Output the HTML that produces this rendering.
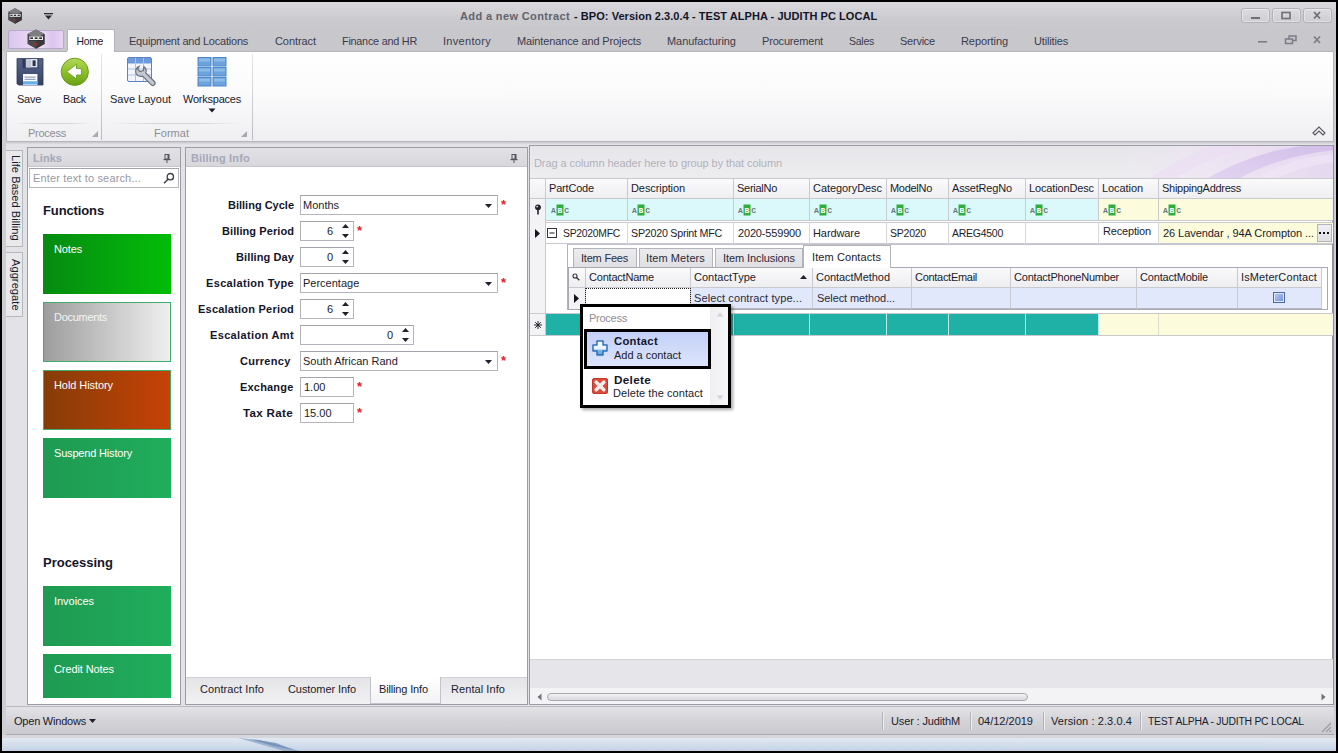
<!DOCTYPE html>
<html lang="en"><head><meta charset="utf-8"><title>Add a new Contract - BPO</title>
<style>
html,body{margin:0;padding:0;}
body{width:1338px;height:753px;overflow:hidden;background:#000;position:relative;font-family:"Liberation Sans",sans-serif;font-size:11px;color:#1b1b2b;}
div,span.t,svg{position:absolute;box-sizing:border-box;}
span.t{white-space:pre;}
.g{color:#8d8d96;}
.w{color:#fff;}

</style></head>
<body>
<div style="left:2px;top:2px;width:1334px;height:749px;background:#cdcdd2;"></div>
<div style="left:2px;top:735px;width:1334px;height:3px;background:#d6d6db;"></div>
<div style="left:2px;top:738px;width:1334px;height:13px;background:linear-gradient(#e2e9f3,#c4d2e6);"></div>
<svg style="left:236px;top:738px" width="70" height="13"><path d="M2 0 L24 2 L64 13 L48 13 L20 5 Z" fill="#8aa3c6" opacity=".75"/><path d="M14 1 L40 5 L58 12 L38 8 Z" fill="#6685b0" opacity=".7"/></svg>
<div style="left:2px;top:2px;width:1334px;height:27px;background:linear-gradient(#d9d9dd,#cbcbd0 60%,#c6c6cb);"></div>
<div style="left:2px;top:29px;width:1334px;height:22px;background:#c7c7cc;"></div>
<svg style="left:7px;top:8px" width="16" height="16" viewBox="0 0 16 16"><polygon points="8,0.3 14.8,4 14.8,12 8,15.7 1.2,12 1.2,4" fill="#4a4a4e"/><polygon points="8,0.3 14.8,4 8,7.6 1.2,4" fill="#7d7d82"/><polygon points="8,7.6 14.8,4 14.8,12 8,15.7" fill="#38383c"/><rect x="2.2" y="5.6" width="11.6" height="3.6" fill="#2c2c2e"/><rect x="3" y="6.3" width="3" height="2.1" fill="none" stroke="#f0f0f0" stroke-width=".8"/><rect x="6.6" y="6.3" width="3" height="2.1" fill="none" stroke="#f0f0f0" stroke-width=".8"/><rect x="10.2" y="6.3" width="3" height="2.1" fill="none" stroke="#f0f0f0" stroke-width=".8"/><path d="M6.5 11.5 L8 13 L9.5 11" stroke="#b32626" stroke-width="1" fill="none"/></svg>
<svg style="left:44px;top:13px" width="9" height="7"><rect x="0" y="0" width="9" height="1.3" fill="#2a2a35"/><path d="M1 2.6 L8 2.6 L4.5 6.4 Z" fill="#2a2a35"/></svg>
<span class="t" style="left:460.0px;top:8.5px;line-height:15px;font-weight:bold;letter-spacing:0.37px;color:#63636e;">Add a new Contract</span>
<span class="t" style="left:574.0px;top:8.5px;line-height:15px;font-weight:bold;letter-spacing:0.05px;color:#15152a;">- BPO: Version 2.3.0.4 - TEST ALPHA - JUDITH PC LOCAL</span>
<div style="left:1241px;top:8px;width:29px;height:15px;border:1px solid #b1b1b8;border-radius:3px;background:linear-gradient(#dcdce0,#cdcdd2);box-shadow:inset 0 0 0 1px rgba(255,255,255,.4);"></div>
<div style="left:1272px;top:8px;width:29px;height:15px;border:1px solid #b1b1b8;border-radius:3px;background:linear-gradient(#dcdce0,#cdcdd2);box-shadow:inset 0 0 0 1px rgba(255,255,255,.4);"></div>
<div style="left:1303px;top:8px;width:29px;height:15px;border:1px solid #b1b1b8;border-radius:3px;background:linear-gradient(#dcdce0,#cdcdd2);box-shadow:inset 0 0 0 1px rgba(255,255,255,.4);"></div>
<svg style="left:1241px;top:8px" width="92" height="15"><rect x="10" y="9" width="9" height="2" fill="#6f6f78"/><rect x="41" y="4.5" width="8" height="6" fill="none" stroke="#6f6f78" stroke-width="1.6"/><path d="M73 4 L79 10.5 M79 4 L73 10.5" stroke="#6f6f78" stroke-width="1.8" fill="none"/></svg>
<svg style="left:1255px;top:33px" width="70" height="14"><rect x="3" y="8" width="9" height="1.6" fill="#7c7c86"/><rect x="34" y="3" width="7" height="4.5" fill="none" stroke="#7c7c86" stroke-width="1.5"/><rect x="30.5" y="6" width="7" height="4.5" fill="#c7c7cc" stroke="#7c7c86" stroke-width="1.5"/><path d="M59 3.5 L65 10 M65 3.5 L59 10" stroke="#7c7c86" stroke-width="1.7" fill="none"/></svg>
<div style="left:8px;top:30px;width:56px;height:19px;border:1px solid #b9a8cc;border-radius:2px;background:linear-gradient(90deg,#d9c6ee,#e6d3f3 30%,#efe2f6 55%,#dcc4ef 80%,#e9d6f5);"></div>
<svg style="left:26px;top:29px" width="20" height="20" viewBox="0 0 16 16"><polygon points="8,0.3 14.8,4 14.8,12 8,15.7 1.2,12 1.2,4" fill="#4a4a4e"/><polygon points="8,0.3 14.8,4 8,7.6 1.2,4" fill="#7d7d82"/><polygon points="8,7.6 14.8,4 14.8,12 8,15.7" fill="#38383c"/><rect x="2.2" y="5.6" width="11.6" height="3.6" fill="#2c2c2e"/><rect x="3" y="6.3" width="3" height="2.1" fill="none" stroke="#f0f0f0" stroke-width=".8"/><rect x="6.6" y="6.3" width="3" height="2.1" fill="none" stroke="#f0f0f0" stroke-width=".8"/><rect x="10.2" y="6.3" width="3" height="2.1" fill="none" stroke="#f0f0f0" stroke-width=".8"/><path d="M6.5 11.5 L8 13 L9.5 11" stroke="#b32626" stroke-width="1" fill="none"/></svg>
<div style="left:67px;top:29px;width:48px;height:23px;background:#fff;border:1px solid #b4b4bb;border-bottom:none;border-radius:2px 2px 0 0;"></div>
<span class="t" style="left:76.5px;top:33.7px;line-height:15px;font-size:10.31px;letter-spacing:-0.25px;color:#1a1a2a;">Home</span>
<span class="t" style="left:129.0px;top:33.5px;line-height:15px;letter-spacing:-0.22px;color:#3c3c4c;">Equipment and Locations</span>
<span class="t" style="left:275.0px;top:33.5px;line-height:15px;letter-spacing:-0.07px;color:#3c3c4c;">Contract</span>
<span class="t" style="left:342.0px;top:33.5px;line-height:15px;font-size:10.86px;letter-spacing:-0.25px;color:#3c3c4c;">Finance and HR</span>
<span class="t" style="left:443.0px;top:33.5px;line-height:15px;letter-spacing:0.31px;color:#3c3c4c;">Inventory</span>
<span class="t" style="left:517.0px;top:33.5px;line-height:15px;letter-spacing:-0.13px;color:#3c3c4c;">Maintenance and Projects</span>
<span class="t" style="left:667.0px;top:33.5px;line-height:15px;letter-spacing:-0.06px;color:#3c3c4c;">Manufacturing</span>
<span class="t" style="left:762.0px;top:33.5px;line-height:15px;letter-spacing:-0.18px;color:#3c3c4c;">Procurement</span>
<span class="t" style="left:849.0px;top:33.7px;line-height:15px;font-size:10.49px;letter-spacing:-0.25px;color:#3c3c4c;">Sales</span>
<span class="t" style="left:900.0px;top:33.5px;line-height:15px;letter-spacing:-0.24px;color:#3c3c4c;">Service</span>
<span class="t" style="left:961.0px;top:33.5px;line-height:15px;letter-spacing:-0.08px;color:#3c3c4c;">Reporting</span>
<span class="t" style="left:1034.0px;top:33.5px;line-height:15px;letter-spacing:-0.16px;color:#3c3c4c;">Utilities</span>
<div style="left:6px;top:51px;width:1328px;height:91px;background:linear-gradient(#ffffff,#fbfbfc 45%,#efeff2);border:1px solid #b4b4bb;"></div>
<div style="left:67px;top:51px;width:47px;height:1px;background:#fff;"></div>
<div style="left:101px;top:54px;width:1px;height:86px;background:linear-gradient(#e6e6ea,#b9b9c0);"></div>
<div style="left:252px;top:54px;width:1px;height:86px;background:linear-gradient(#e6e6ea,#b9b9c0);"></div>
<div style="left:14px;top:123px;width:78px;height:1px;background:linear-gradient(90deg,rgba(200,200,206,0),#d4d4da 30%,#d4d4da 70%,rgba(200,200,206,0));"></div>
<div style="left:112px;top:123px;width:128px;height:1px;background:linear-gradient(90deg,rgba(200,200,206,0),#d4d4da 30%,#d4d4da 70%,rgba(200,200,206,0));"></div>
<svg style="left:14px;top:57px" width="32" height="32" viewBox="0 0 32 32"><defs><linearGradient id="sv" x1="0" y1="0" x2="0" y2="1"><stop offset="0" stop-color="#56648a"/><stop offset="1" stop-color="#364266"/></linearGradient></defs><path d="M3 1.6 H29 V28 H4.4 L3 26.6 Z" fill="url(#sv)" stroke="#2b3556" stroke-width=".8"/><rect x="8.5" y="2" width="16" height="9.2" fill="#2f3a5c"/><rect x="11.8" y="2" width="11.6" height="8.4" fill="#dfe3ea"/><rect x="12" y="2" width="5" height="8.4" fill="#c3c9d4"/><rect x="18.6" y="3.4" width="3" height="5.6" fill="#2a3352"/><rect x="9" y="17" width="14.4" height="11" fill="#fbfcfe"/><rect x="9" y="24.2" width="14.4" height="3.3" fill="#69aee4"/><rect x="10.6" y="19.6" width="11" height="1" fill="#7f8db0"/><rect x="10.6" y="21.8" width="11" height="1" fill="#7f8db0"/></svg>
<svg style="left:59px;top:56px" width="32" height="32" viewBox="0 0 32 32"><defs><linearGradient id="bk" x1="0" y1="0" x2="0" y2="1"><stop offset="0" stop-color="#b3d957"/><stop offset=".5" stop-color="#8cc02c"/><stop offset="1" stop-color="#69a015"/></linearGradient></defs><circle cx="15.8" cy="15.8" r="13.6" fill="url(#bk)" stroke="#6a9c1c" stroke-width="1"/><path d="M7.7 15.7 L17.5 8.2 V12.6 H22.4 V19 H17.5 V23 Z" fill="#fff" stroke="#6d9f1e" stroke-width=".9" stroke-linejoin="round"/></svg>
<svg style="left:125px;top:56px" width="34" height="34" viewBox="0 0 34 34"><rect x="2.5" y="1.5" width="24" height="24" rx="1.5" fill="#f1f5fb" stroke="#5c82c0" stroke-width="1"/><path d="M3 2 H26 V7.5 H3 Z" fill="#6b9bdc"/><path d="M3 13 H26 M3 19 H26 M10.5 2 V25 M18.5 2 V25" stroke="#a9c3e4" stroke-width="1"/><path d="M14.2 10.2 a5.4 5.4 0 0 0 -3 7.5 a5.4 5.4 0 0 0 6.4 2.4 l8.4 8.6 a2.3 2.3 0 0 0 3.4 -3.2 l-8.7 -8.6 a5.4 5.4 0 0 0 -1.7 -6.2 l-0.6 3.8 l-3.3 1 l-2.4 -2.3 z" fill="#c3c7cf" stroke="#6a6f7c" stroke-width="1.2"/></svg>
<svg style="left:197px;top:57px" width="30" height="30" viewBox="0 0 30 30"><rect x="1" y="0.5" width="13" height="8.5" fill="#6da3dc" stroke="#4b86c9" stroke-width="1"/><rect x="2" y="1.5" width="11" height="3" fill="#8dbbe8"/><rect x="16" y="0.5" width="13" height="8.5" fill="#6da3dc" stroke="#4b86c9" stroke-width="1"/><rect x="17" y="1.5" width="11" height="3" fill="#8dbbe8"/><rect x="1" y="10.5" width="13" height="8.5" fill="#6da3dc" stroke="#4b86c9" stroke-width="1"/><rect x="2" y="11.5" width="11" height="3" fill="#8dbbe8"/><rect x="16" y="10.5" width="13" height="8.5" fill="#6da3dc" stroke="#4b86c9" stroke-width="1"/><rect x="17" y="11.5" width="11" height="3" fill="#8dbbe8"/><rect x="1" y="20.5" width="13" height="8.5" fill="#6da3dc" stroke="#4b86c9" stroke-width="1"/><rect x="2" y="21.5" width="11" height="3" fill="#8dbbe8"/><rect x="16" y="20.5" width="13" height="8.5" fill="#6da3dc" stroke="#4b86c9" stroke-width="1"/><rect x="17" y="21.5" width="11" height="3" fill="#8dbbe8"/></svg>
<span class="t" style="left:17.0px;top:91.5px;line-height:15px;letter-spacing:-0.27px;color:#1a1a2a;">Save</span>
<span class="t" style="left:63.0px;top:91.6px;line-height:15px;font-size:10.79px;letter-spacing:-0.25px;color:#1a1a2a;">Back</span>
<span class="t" style="left:110.0px;top:91.5px;line-height:15px;letter-spacing:-0.01px;color:#1a1a2a;">Save Layout</span>
<span class="t" style="left:183.0px;top:91.5px;line-height:15px;letter-spacing:-0.23px;color:#1a1a2a;">Workspaces</span>
<svg style="left:208px;top:108px" width="8" height="5"><path d="M0.5 0.5 H7.5 L4 4.5 Z" fill="#1a1a2a"/></svg>
<span class="t g" style="left:28.0px;top:125.5px;line-height:15px;letter-spacing:-0.25px;">Process</span>
<span class="t g" style="left:154.0px;top:125.5px;line-height:15px;letter-spacing:0.03px;">Format</span>
<svg style="left:92px;top:131px" width="6" height="6"><path d="M6 0 V6 H0 Z" fill="#a8a8b0"/></svg>
<svg style="left:241px;top:131px" width="6" height="6"><path d="M6 0 V6 H0 Z" fill="#a8a8b0"/></svg>
<svg style="left:1312px;top:126px" width="14" height="10"><path d="M1 7 L7 1 L13 7 L11 9 L7 5 L3 9 Z" stroke="#55555f" stroke-width="1.1" fill="#f4f4f6"/></svg>
<div style="left:6px;top:142px;width:1328px;height:565px;background:#e3e3e7;"></div>
<div style="left:6px;top:142px;width:1328px;height:2px;background:linear-gradient(#c9c9ce,#dcdce0);"></div>
<div style="left:6px;top:150px;width:17px;height:97px;background:#e9e9ec;border:1px solid #b7b7be;border-left:none;"></div>
<div style="left:6px;top:252px;width:17px;height:65px;background:#e9e9ec;border:1px solid #b7b7be;border-left:none;"></div>
<span class="t" style="left:22.5px;top:155px;line-height:14px;transform-origin:0 0;transform:rotate(90deg);letter-spacing:0.07px;color:#1b1b2b;">Life Based Billing</span>
<span class="t" style="left:22.5px;top:258.5px;line-height:14px;transform-origin:0 0;transform:rotate(90deg);letter-spacing:0.1px;color:#1b1b2b;">Aggregate</span>
<div style="left:27px;top:147px;width:154px;height:558px;background:#fff;border:1px solid #9c9ca6;"></div>
<div style="left:28px;top:148px;width:152px;height:19px;background:linear-gradient(#e2e2e6,#d7d7dc);border-bottom:1px solid #c6c6cc;"></div>
<span class="t" style="left:33.0px;top:150.5px;line-height:15px;font-weight:bold;letter-spacing:0.05px;color:#a4a8b8;">Links</span>
<svg style="left:163px;top:154px" width="8" height="9"><rect x="2" y="0.5" width="4" height="4.5" fill="none" stroke="#55555f" stroke-width="1"/><rect x="4.5" y="1" width="1.5" height="4" fill="#55555f"/><rect x="0.5" y="5" width="7" height="1.2" fill="#55555f"/><rect x="3.5" y="6" width="1" height="3" fill="#55555f"/></svg>
<div style="left:29px;top:168px;width:150px;height:20px;background:#fff;border:1px solid #b4b4ba;border-top-color:#a2a2a9;"></div>
<span class="t" style="left:33.0px;top:170.5px;line-height:15px;letter-spacing:0.15px;color:#9a9aa2;">Enter text to search...</span>
<svg style="left:163px;top:172px" width="12" height="12"><circle cx="7.3" cy="4.7" r="3.2" fill="none" stroke="#3a3a44" stroke-width="1.3"/><path d="M5 7.2 L1 11.2" stroke="#3a3a44" stroke-width="1.5"/></svg>
<span class="t" style="left:43.0px;top:201.5px;line-height:17px;font-size:13.00px;font-weight:bold;letter-spacing:-0.12px;color:#15152a;">Functions</span>
<span class="t" style="left:43.0px;top:553.5px;line-height:17px;font-size:13.00px;font-weight:bold;letter-spacing:-0.01px;color:#15152a;">Processing</span>
<div style="left:43px;top:234px;width:128px;height:60px;background:linear-gradient(90deg,#078a12,#02bd08);"></div>
<span class="t" style="left:54.0px;top:241.5px;line-height:15px;letter-spacing:-0.15px;color:#fff;">Notes</span>
<div style="left:43px;top:302px;width:128px;height:60px;background:linear-gradient(90deg,#9d9d9d,#efefef);border:1px solid #3fae6c;"></div>
<span class="t" style="left:54.0px;top:309.5px;line-height:15px;letter-spacing:-0.29px;color:#f4f4f4;">Documents</span>
<div style="left:43px;top:370px;width:128px;height:60px;background:linear-gradient(90deg,#863c08,#c64206);border:1px solid #3fae6c;"></div>
<span class="t" style="left:54.0px;top:377.5px;line-height:15px;letter-spacing:-0.08px;color:#fff;">Hold History</span>
<div style="left:43px;top:438px;width:128px;height:60px;background:linear-gradient(90deg,#1f9a52,#1fae5c);"></div>
<span class="t" style="left:54.0px;top:445.5px;line-height:15px;letter-spacing:-0.18px;color:#fff;">Suspend History</span>
<div style="left:43px;top:586px;width:128px;height:60px;background:linear-gradient(90deg,#1f9a52,#1fae5c);"></div>
<span class="t" style="left:54.0px;top:593.5px;line-height:15px;letter-spacing:-0.04px;color:#fff;">Invoices</span>
<div style="left:43px;top:654px;width:128px;height:44px;background:linear-gradient(90deg,#1f9a52,#1fae5c);"></div>
<span class="t" style="left:54.0px;top:661.5px;line-height:15px;letter-spacing:-0.10px;color:#fff;">Credit Notes</span>
<div style="left:185px;top:147px;width:343px;height:558px;background:#fff;border:1px solid #9c9ca6;"></div>
<div style="left:186px;top:148px;width:341px;height:19px;background:linear-gradient(#e2e2e6,#d7d7dc);border-bottom:1px solid #c6c6cc;"></div>
<span class="t" style="left:191.0px;top:150.5px;line-height:15px;font-weight:bold;letter-spacing:0.18px;color:#a4a8b8;">Billing Info</span>
<svg style="left:510px;top:154px" width="8" height="9"><rect x="2" y="0.5" width="4" height="4.5" fill="none" stroke="#55555f" stroke-width="1"/><rect x="4.5" y="1" width="1.5" height="4" fill="#55555f"/><rect x="0.5" y="5" width="7" height="1.2" fill="#55555f"/><rect x="3.5" y="6" width="1" height="3" fill="#55555f"/></svg>
<span class="t" style="left:228.0px;top:197.5px;line-height:15px;font-weight:bold;letter-spacing:-0.00px;color:#15152a;">Billing Cycle</span>
<div style="left:300px;top:195px;width:198px;height:20px;background:#fff;border:1px solid #b4b4ba;border-top-color:#a2a2a9;"></div>
<span class="t" style="left:303.0px;top:197.5px;line-height:15px;">Months</span>
<svg style="left:485px;top:204px" width="7" height="4"><path d="M0 0 H7 L3.5 4 Z" fill="#20202c"/></svg>
<span class="t" style="left:501px;top:198px;color:#e8202a;font-weight:bold;font-size:13px;line-height:14px;">*</span>
<span class="t" style="left:222.0px;top:223.5px;line-height:15px;font-weight:bold;letter-spacing:0.08px;color:#15152a;">Billing Period</span>
<div style="left:300px;top:221px;width:54px;height:20px;background:#fff;border:1px solid #b4b4ba;border-top-color:#a2a2a9;"></div>
<span class="t" style="left:326.9px;top:223.5px;line-height:15px;">6</span>
<svg style="left:342px;top:224px" width="7" height="4"><path d="M0 4 H7 L3.5 0 Z" fill="#20202c"/></svg>
<svg style="left:342px;top:234px" width="7" height="4"><path d="M0 0 H7 L3.5 4 Z" fill="#20202c"/></svg>
<span class="t" style="left:357px;top:224px;color:#e8202a;font-weight:bold;font-size:13px;line-height:14px;">*</span>
<span class="t" style="left:236.0px;top:249.5px;line-height:15px;font-weight:bold;letter-spacing:0.11px;color:#15152a;">Billing Day</span>
<div style="left:300px;top:247px;width:54px;height:20px;background:#fff;border:1px solid #b4b4ba;border-top-color:#a2a2a9;"></div>
<span class="t" style="left:326.9px;top:249.5px;line-height:15px;">0</span>
<svg style="left:342px;top:250px" width="7" height="4"><path d="M0 4 H7 L3.5 0 Z" fill="#20202c"/></svg>
<svg style="left:342px;top:260px" width="7" height="4"><path d="M0 0 H7 L3.5 4 Z" fill="#20202c"/></svg>
<span class="t" style="left:206.0px;top:275.5px;line-height:15px;font-weight:bold;letter-spacing:0.34px;color:#15152a;">Escalation Type</span>
<div style="left:300px;top:273px;width:198px;height:20px;background:#fff;border:1px solid #b4b4ba;border-top-color:#a2a2a9;"></div>
<span class="t" style="left:303.0px;top:275.5px;line-height:15px;">Percentage</span>
<svg style="left:485px;top:282px" width="7" height="4"><path d="M0 0 H7 L3.5 4 Z" fill="#20202c"/></svg>
<span class="t" style="left:501px;top:276px;color:#e8202a;font-weight:bold;font-size:13px;line-height:14px;">*</span>
<span class="t" style="left:198.0px;top:301.5px;line-height:15px;font-weight:bold;letter-spacing:0.22px;color:#15152a;">Escalation Period</span>
<div style="left:300px;top:299px;width:54px;height:20px;background:#fff;border:1px solid #b4b4ba;border-top-color:#a2a2a9;"></div>
<span class="t" style="left:326.9px;top:301.5px;line-height:15px;">6</span>
<svg style="left:342px;top:302px" width="7" height="4"><path d="M0 4 H7 L3.5 0 Z" fill="#20202c"/></svg>
<svg style="left:342px;top:312px" width="7" height="4"><path d="M0 0 H7 L3.5 4 Z" fill="#20202c"/></svg>
<span class="t" style="left:210.0px;top:327.5px;line-height:15px;font-weight:bold;letter-spacing:0.35px;color:#15152a;">Escalation Amt</span>
<div style="left:300px;top:325px;width:114px;height:20px;background:#fff;border:1px solid #b4b4ba;border-top-color:#a2a2a9;"></div>
<span class="t" style="left:386.9px;top:327.5px;line-height:15px;">0</span>
<svg style="left:402px;top:328px" width="7" height="4"><path d="M0 4 H7 L3.5 0 Z" fill="#20202c"/></svg>
<svg style="left:402px;top:338px" width="7" height="4"><path d="M0 0 H7 L3.5 4 Z" fill="#20202c"/></svg>
<span class="t" style="left:240.0px;top:353.5px;line-height:15px;font-weight:bold;letter-spacing:0.28px;color:#15152a;">Currency</span>
<div style="left:300px;top:351px;width:198px;height:20px;background:#fff;border:1px solid #b4b4ba;border-top-color:#a2a2a9;"></div>
<span class="t" style="left:303.0px;top:353.5px;line-height:15px;">South African Rand</span>
<svg style="left:485px;top:360px" width="7" height="4"><path d="M0 0 H7 L3.5 4 Z" fill="#20202c"/></svg>
<span class="t" style="left:501px;top:354px;color:#e8202a;font-weight:bold;font-size:13px;line-height:14px;">*</span>
<span class="t" style="left:240.0px;top:379.5px;line-height:15px;font-weight:bold;letter-spacing:0.19px;color:#15152a;">Exchange</span>
<div style="left:300px;top:377px;width:54px;height:20px;background:#fff;border:1px solid #b4b4ba;border-top-color:#a2a2a9;"></div>
<span class="t" style="left:304.0px;top:379.5px;line-height:15px;">1.00</span>
<span class="t" style="left:357px;top:380px;color:#e8202a;font-weight:bold;font-size:13px;line-height:14px;">*</span>
<span class="t" style="left:243.0px;top:405.3px;line-height:15px;font-size:11.62px;font-weight:bold;letter-spacing:0.30px;color:#15152a;">Tax Rate</span>
<div style="left:300px;top:403px;width:54px;height:20px;background:#fff;border:1px solid #b4b4ba;border-top-color:#a2a2a9;"></div>
<span class="t" style="left:304.0px;top:405.5px;line-height:15px;">15.00</span>
<span class="t" style="left:357px;top:406px;color:#e8202a;font-weight:bold;font-size:13px;line-height:14px;">*</span>
<div style="left:186px;top:677px;width:341px;height:27px;background:linear-gradient(#e4e4e8,#f1f1f3);border-top:1px solid #d0d0d6;"></div>
<div style="left:370px;top:677px;width:71px;height:27px;background:linear-gradient(#ffffff,#f2f2f4);border:1px solid #c2c2ca;border-top:none;"></div>
<span class="t" style="left:200.0px;top:681.5px;line-height:15px;letter-spacing:0.08px;">Contract Info</span>
<span class="t" style="left:288.0px;top:681.5px;line-height:15px;letter-spacing:-0.08px;">Customer Info</span>
<span class="t" style="left:379.0px;top:681.5px;line-height:15px;letter-spacing:-0.15px;">Billing Info</span>
<span class="t" style="left:451.0px;top:681.5px;line-height:15px;letter-spacing:0.07px;">Rental Info</span>
<div style="left:529px;top:145px;width:805px;height:560px;background:#fff;border:1px solid #9c9ca6;"></div>
<div style="left:1332px;top:145px;width:2px;height:560px;background:#92929b;"></div>
<div style="left:530px;top:146px;width:803px;height:32px;background:linear-gradient(#e6e6ea,#ededf0);"></div>
<svg style="left:1080px;top:146px" width="253" height="32" viewBox="0 0 253 31" preserveAspectRatio="none"><defs><linearGradient id="pg" x1="0" y1="0" x2="1" y2="0"><stop offset="0" stop-color="#efe6f4" stop-opacity="0"/><stop offset=".45" stop-color="#efe3f5" stop-opacity=".9"/><stop offset="1" stop-color="#e3d3f0"/></linearGradient><linearGradient id="pg2" x1="0" y1="1" x2="1" y2="0"><stop offset="0" stop-color="#d9c6ee"/><stop offset="1" stop-color="#c7aee6"/></linearGradient></defs><rect x="40" y="0" width="213" height="31" fill="url(#pg)" opacity=".8"/><path d="M96 31 C125 14 150 5 180 0 H132 C110 8 85 20 70 31 Z" fill="#ead9f3" opacity=".45"/><path d="M128 31 C160 14 190 4 222 0 H253 V4 C215 8 185 18 160 31 Z" fill="url(#pg2)" opacity=".6"/><path d="M175 31 C200 18 225 10 253 8 V16 C232 18 212 24 198 31 Z" fill="#efe6f7" opacity=".7"/></svg>
<span class="t" style="left:534.0px;top:155.5px;line-height:15px;letter-spacing:-0.08px;color:#b1b1ba;">Drag a column header here to group by that column</span>
<div style="left:530px;top:178px;width:803px;height:21px;background:linear-gradient(#fafafb,#efeff2);border-top:1px solid #c9c9d0;border-bottom:1px solid #c9c9d0;"></div>
<div style="left:530px;top:199px;width:803px;height:22px;background:#f3f3f5;border-bottom:1px solid #c9c9d0;"></div>
<div style="left:546px;top:199px;width:552px;height:21px;background:#dbf9fa;"></div>
<div style="left:1098px;top:199px;width:234px;height:21px;background:#fcfbdb;"></div>
<div style="left:530px;top:222px;width:803px;height:22px;background:#fff;border-top:1px solid #c9c9d0;border-bottom:1px solid #c9c9d0;"></div>
<div style="left:1158px;top:223px;width:174px;height:20px;background:#fcfbdb;"></div>
<div style="left:530px;top:178px;width:16px;height:157px;background:#f3f3f5;border-right:1px solid #c9c9d0;"></div>
<div style="left:530px;top:178px;width:16px;height:21px;background:linear-gradient(#fafafb,#efeff2);border-top:1px solid #c9c9d0;border-bottom:1px solid #c9c9d0;border-right:1px solid #c9c9d0;"></div>


<span class="t" style="left:549.0px;top:180.5px;line-height:15px;letter-spacing:-0.19px;">PartCode</span>
<svg style="left:551px;top:204px" width="18" height="12" viewBox="0 0 18 12"><rect x="5.5" y="0.5" width="7" height="11" fill="#2fae3e"/><text x="0" y="8.9" font-family="Liberation Mono, monospace" font-size="8" font-weight="bold" fill="#6a7a80">A</text><text x="6.6" y="8.9" font-family="Liberation Mono, monospace" font-size="8" font-weight="bold" fill="#fff">B</text><text x="13.2" y="8.9" font-family="Liberation Mono, monospace" font-size="8" font-weight="bold" fill="#6a7a80">C</text></svg>
<div style="left:627px;top:179px;width:1px;height:42px;background:#c9c9d0;"></div>
<div style="left:627px;top:222px;width:1px;height:22px;background:#d6d6dc;"></div>
<span class="t" style="left:631.0px;top:180.5px;line-height:15px;letter-spacing:-0.09px;">Description</span>
<svg style="left:632px;top:204px" width="18" height="12" viewBox="0 0 18 12"><rect x="5.5" y="0.5" width="7" height="11" fill="#2fae3e"/><text x="0" y="8.9" font-family="Liberation Mono, monospace" font-size="8" font-weight="bold" fill="#6a7a80">A</text><text x="6.6" y="8.9" font-family="Liberation Mono, monospace" font-size="8" font-weight="bold" fill="#fff">B</text><text x="13.2" y="8.9" font-family="Liberation Mono, monospace" font-size="8" font-weight="bold" fill="#6a7a80">C</text></svg>
<div style="left:733px;top:179px;width:1px;height:42px;background:#c9c9d0;"></div>
<div style="left:733px;top:222px;width:1px;height:22px;background:#d6d6dc;"></div>
<span class="t" style="left:737.0px;top:180.5px;line-height:15px;letter-spacing:-0.27px;">SerialNo</span>
<svg style="left:738px;top:204px" width="18" height="12" viewBox="0 0 18 12"><rect x="5.5" y="0.5" width="7" height="11" fill="#2fae3e"/><text x="0" y="8.9" font-family="Liberation Mono, monospace" font-size="8" font-weight="bold" fill="#6a7a80">A</text><text x="6.6" y="8.9" font-family="Liberation Mono, monospace" font-size="8" font-weight="bold" fill="#fff">B</text><text x="13.2" y="8.9" font-family="Liberation Mono, monospace" font-size="8" font-weight="bold" fill="#6a7a80">C</text></svg>
<div style="left:809px;top:179px;width:1px;height:42px;background:#c9c9d0;"></div>
<div style="left:809px;top:222px;width:1px;height:22px;background:#d6d6dc;"></div>
<span class="t" style="left:813.0px;top:180.5px;line-height:15px;letter-spacing:-0.06px;">CategoryDesc</span>
<svg style="left:814px;top:204px" width="18" height="12" viewBox="0 0 18 12"><rect x="5.5" y="0.5" width="7" height="11" fill="#2fae3e"/><text x="0" y="8.9" font-family="Liberation Mono, monospace" font-size="8" font-weight="bold" fill="#6a7a80">A</text><text x="6.6" y="8.9" font-family="Liberation Mono, monospace" font-size="8" font-weight="bold" fill="#fff">B</text><text x="13.2" y="8.9" font-family="Liberation Mono, monospace" font-size="8" font-weight="bold" fill="#6a7a80">C</text></svg>
<div style="left:886px;top:179px;width:1px;height:42px;background:#c9c9d0;"></div>
<div style="left:886px;top:222px;width:1px;height:22px;background:#d6d6dc;"></div>
<span class="t" style="left:890.0px;top:180.5px;line-height:15px;letter-spacing:-0.29px;">ModelNo</span>
<svg style="left:891px;top:204px" width="18" height="12" viewBox="0 0 18 12"><rect x="5.5" y="0.5" width="7" height="11" fill="#2fae3e"/><text x="0" y="8.9" font-family="Liberation Mono, monospace" font-size="8" font-weight="bold" fill="#6a7a80">A</text><text x="6.6" y="8.9" font-family="Liberation Mono, monospace" font-size="8" font-weight="bold" fill="#fff">B</text><text x="13.2" y="8.9" font-family="Liberation Mono, monospace" font-size="8" font-weight="bold" fill="#6a7a80">C</text></svg>
<div style="left:948px;top:179px;width:1px;height:42px;background:#c9c9d0;"></div>
<div style="left:948px;top:222px;width:1px;height:22px;background:#d6d6dc;"></div>
<span class="t" style="left:952.0px;top:180.5px;line-height:15px;letter-spacing:-0.18px;">AssetRegNo</span>
<svg style="left:953px;top:204px" width="18" height="12" viewBox="0 0 18 12"><rect x="5.5" y="0.5" width="7" height="11" fill="#2fae3e"/><text x="0" y="8.9" font-family="Liberation Mono, monospace" font-size="8" font-weight="bold" fill="#6a7a80">A</text><text x="6.6" y="8.9" font-family="Liberation Mono, monospace" font-size="8" font-weight="bold" fill="#fff">B</text><text x="13.2" y="8.9" font-family="Liberation Mono, monospace" font-size="8" font-weight="bold" fill="#6a7a80">C</text></svg>
<div style="left:1025px;top:179px;width:1px;height:42px;background:#c9c9d0;"></div>
<div style="left:1025px;top:222px;width:1px;height:22px;background:#d6d6dc;"></div>
<span class="t" style="left:1029.0px;top:180.5px;line-height:15px;letter-spacing:-0.14px;">LocationDesc</span>
<svg style="left:1030px;top:204px" width="18" height="12" viewBox="0 0 18 12"><rect x="5.5" y="0.5" width="7" height="11" fill="#2fae3e"/><text x="0" y="8.9" font-family="Liberation Mono, monospace" font-size="8" font-weight="bold" fill="#6a7a80">A</text><text x="6.6" y="8.9" font-family="Liberation Mono, monospace" font-size="8" font-weight="bold" fill="#fff">B</text><text x="13.2" y="8.9" font-family="Liberation Mono, monospace" font-size="8" font-weight="bold" fill="#6a7a80">C</text></svg>
<div style="left:1098px;top:179px;width:1px;height:42px;background:#c9c9d0;"></div>
<div style="left:1098px;top:222px;width:1px;height:22px;background:#d6d6dc;"></div>
<span class="t" style="left:1102.0px;top:180.5px;line-height:15px;letter-spacing:-0.07px;">Location</span>
<svg style="left:1103px;top:204px" width="18" height="12" viewBox="0 0 18 12"><rect x="5.5" y="0.5" width="7" height="11" fill="#2fae3e"/><text x="0" y="8.9" font-family="Liberation Mono, monospace" font-size="8" font-weight="bold" fill="#6a7a80">A</text><text x="6.6" y="8.9" font-family="Liberation Mono, monospace" font-size="8" font-weight="bold" fill="#fff">B</text><text x="13.2" y="8.9" font-family="Liberation Mono, monospace" font-size="8" font-weight="bold" fill="#6a7a80">C</text></svg>
<div style="left:1158px;top:179px;width:1px;height:42px;background:#c9c9d0;"></div>
<div style="left:1158px;top:222px;width:1px;height:22px;background:#d6d6dc;"></div>
<span class="t" style="left:1162.0px;top:180.5px;line-height:15px;letter-spacing:-0.28px;">ShippingAddress</span>
<svg style="left:1163px;top:204px" width="18" height="12" viewBox="0 0 18 12"><rect x="5.5" y="0.5" width="7" height="11" fill="#2fae3e"/><text x="0" y="8.9" font-family="Liberation Mono, monospace" font-size="8" font-weight="bold" fill="#6a7a80">A</text><text x="6.6" y="8.9" font-family="Liberation Mono, monospace" font-size="8" font-weight="bold" fill="#fff">B</text><text x="13.2" y="8.9" font-family="Liberation Mono, monospace" font-size="8" font-weight="bold" fill="#6a7a80">C</text></svg>
<svg style="left:534px;top:204px" width="8" height="11"><circle cx="4" cy="3.3" r="2.9" fill="#22222c"/><path d="M4 5 V10.5" stroke="#22222c" stroke-width="1.6"/><circle cx="3.2" cy="2.6" r="0.9" fill="#e8e8ec"/></svg>
<svg style="left:535px;top:229px" width="5" height="9"><path d="M0 0 L5 4.5 L0 9 Z" fill="#15151f"/></svg>
<svg style="left:547px;top:228px" width="10" height="10"><rect x="0.5" y="0.5" width="9" height="9" fill="#fff" stroke="#33333c"/><rect x="2.5" y="4.5" width="5" height="1" fill="#15151f"/></svg>
<span class="t" style="left:563.0px;top:225.7px;line-height:15px;font-size:10.35px;letter-spacing:-0.25px;">SP2020MFC</span>
<span class="t" style="left:631.0px;top:225.6px;line-height:15px;font-size:10.71px;letter-spacing:-0.25px;">SP2020 Sprint MFC</span>
<span class="t" style="left:738.0px;top:225.5px;line-height:15px;letter-spacing:-0.17px;">2020-559900</span>
<span class="t" style="left:813.0px;top:225.5px;line-height:15px;letter-spacing:-0.09px;">Hardware</span>
<span class="t" style="left:890.0px;top:225.7px;line-height:15px;font-size:10.53px;letter-spacing:-0.25px;">SP2020</span>
<span class="t" style="left:952.0px;top:225.7px;line-height:15px;font-size:10.48px;letter-spacing:-0.25px;">AREG4500</span>
<span class="t" style="left:1103.0px;top:223.5px;line-height:15px;letter-spacing:-0.17px;">Reception</span>
<span class="t" style="left:1163.0px;top:225.5px;line-height:15px;letter-spacing:-0.06px;">26 Lavendar , 94A Crompton ...</span>
<div style="left:1317px;top:224px;width:15px;height:18px;background:linear-gradient(#f0f0f3,#dfdfe4);border:1px solid #b4b4bd;"></div>
<svg style="left:1319px;top:232px" width="10" height="3"><rect x="0" y="0" width="2" height="2" fill="#111"/><rect x="4" y="0" width="2" height="2" fill="#111"/><rect x="8" y="0" width="2" height="2" fill="#111"/></svg>
<div style="left:546px;top:245px;width:786px;height:69px;background:#fff;"></div>
<div style="left:567px;top:244px;width:765px;height:1px;background:#c2c2ca;"></div>
<div style="left:567px;top:244px;width:1px;height:66px;background:#b3b3bc;"></div>
<div style="left:573px;top:248px;width:64px;height:20px;background:linear-gradient(#ececef,#dfdfe3);border:1px solid #b3b3bc;border-bottom:none;"></div>
<span class="t" style="left:581.0px;top:250.5px;line-height:15px;letter-spacing:-0.21px;color:#2a2a3a;">Item Fees</span>
<div style="left:639px;top:248px;width:74px;height:20px;background:linear-gradient(#ececef,#dfdfe3);border:1px solid #b3b3bc;border-bottom:none;"></div>
<span class="t" style="left:646.0px;top:250.5px;line-height:15px;letter-spacing:0.08px;color:#2a2a3a;">Item Meters</span>
<div style="left:715px;top:248px;width:88px;height:20px;background:linear-gradient(#ececef,#dfdfe3);border:1px solid #b3b3bc;border-bottom:none;"></div>
<span class="t" style="left:723.0px;top:250.5px;line-height:15px;letter-spacing:-0.09px;color:#2a2a3a;">Item Inclusions</span>
<div style="left:568px;top:267px;width:760px;height:43px;background:#fff;border:1px solid #a9a9b3;"></div>
<div style="left:803px;top:245px;width:88px;height:23px;background:#fff;border:1px solid #b3b3bc;border-bottom:none;"></div>
<span class="t" style="left:812.0px;top:249.5px;line-height:15px;letter-spacing:0.09px;">Item Contacts</span>
<div style="left:569px;top:268px;width:752px;height:20px;background:linear-gradient(#fafafb,#eeeef1);border-bottom:1px solid #c9c9d0;"></div>
<div style="left:569px;top:288px;width:752px;height:21px;background:#e2e8fb;border-bottom:1px solid #b9b9c4;"></div>
<div style="left:569px;top:288px;width:16px;height:21px;background:#f3f3f5;"></div>
<div style="left:585px;top:288px;width:105px;height:20px;background:#fff;"></div>
<div style="left:585px;top:268px;width:1px;height:41px;background:#c9c9d0;"></div>
<span class="t" style="left:589.0px;top:269.5px;line-height:15px;letter-spacing:-0.21px;">ContactName</span>
<div style="left:690px;top:268px;width:1px;height:41px;background:#c9c9d0;"></div>
<span class="t" style="left:694.0px;top:269.5px;line-height:15px;letter-spacing:0.02px;">ContactType</span>
<div style="left:812px;top:268px;width:1px;height:41px;background:#c9c9d0;"></div>
<span class="t" style="left:816.0px;top:269.5px;line-height:15px;letter-spacing:-0.05px;">ContactMethod</span>
<div style="left:911px;top:268px;width:1px;height:41px;background:#c9c9d0;"></div>
<span class="t" style="left:915.0px;top:269.5px;line-height:15px;letter-spacing:-0.29px;">ContactEmail</span>
<div style="left:1010px;top:268px;width:1px;height:41px;background:#c9c9d0;"></div>
<span class="t" style="left:1014.0px;top:269.5px;line-height:15px;letter-spacing:-0.21px;">ContactPhoneNumber</span>
<div style="left:1136px;top:268px;width:1px;height:41px;background:#c9c9d0;"></div>
<span class="t" style="left:1140.0px;top:269.5px;line-height:15px;letter-spacing:-0.18px;">ContactMobile</span>
<div style="left:1237px;top:268px;width:1px;height:41px;background:#c9c9d0;"></div>
<span class="t" style="left:1241.0px;top:269.5px;line-height:15px;letter-spacing:0.10px;">IsMeterContact</span>
<div style="left:1321px;top:268px;width:1px;height:41px;background:#c9c9d0;"></div>
<div style="left:585px;top:288px;width:106px;height:21px;border:1px dotted #222;"></div>
<svg style="left:572px;top:273px" width="8" height="8"><circle cx="3" cy="3" r="2" fill="none" stroke="#33333c" stroke-width="1.1"/><path d="M4.5 4.5 L7.3 7.3" stroke="#33333c" stroke-width="1.4"/></svg>
<svg style="left:800px;top:275px" width="7" height="4"><path d="M0 4 H7 L3.5 0 Z" fill="#20202c"/></svg>
<svg style="left:574px;top:294px" width="5" height="9"><path d="M0 0 L5 4.5 L0 9 Z" fill="#15151f"/></svg>
<span class="t" style="left:694.0px;top:290.5px;line-height:15px;letter-spacing:0.10px;color:#2a2a3a;">Select contract type...</span>
<span class="t" style="left:817.0px;top:290.5px;line-height:15px;letter-spacing:-0.09px;color:#2a2a3a;">Select method...</span>
<div style="left:1273px;top:292px;width:12px;height:11px;background:linear-gradient(135deg,#b8cbf0,#6f93d8);border:1px solid #4b67a8;box-shadow:inset 0 0 0 1px #dfe8fa;"></div>
<div style="left:530px;top:313px;width:803px;height:23px;background:#f3f3f5;border-top:1px solid #c9c9d0;border-bottom:1px solid #c9c9d0;"></div>
<div style="left:546px;top:314px;width:552px;height:21px;background:#1fb0a6;"></div>
<div style="left:1098px;top:314px;width:234px;height:21px;background:#fcfbdb;"></div>
<div style="left:627px;top:314px;width:1px;height:21px;background:#bfe9e5;"></div>
<div style="left:733px;top:314px;width:1px;height:21px;background:#bfe9e5;"></div>
<div style="left:809px;top:314px;width:1px;height:21px;background:#bfe9e5;"></div>
<div style="left:886px;top:314px;width:1px;height:21px;background:#bfe9e5;"></div>
<div style="left:948px;top:314px;width:1px;height:21px;background:#bfe9e5;"></div>
<div style="left:1025px;top:314px;width:1px;height:21px;background:#bfe9e5;"></div>
<div style="left:1098px;top:314px;width:1px;height:21px;background:#bfe9e5;"></div>
<div style="left:1158px;top:314px;width:1px;height:21px;background:#dcdccf;"></div>
<div style="left:545px;top:313px;width:1px;height:23px;background:#c9c9d0;"></div>
<svg style="left:534px;top:321px" width="8" height="8"><path d="M4 0 V8 M0 4 H8 M1.2 1.2 L6.8 6.8 M6.8 1.2 L1.2 6.8" stroke="#22222c" stroke-width="1"/></svg>
<div style="left:530px;top:659px;width:803px;height:29px;background:#e6e6ea;border-top:1px solid #d2d2d8;"></div>
<div style="left:530px;top:688px;width:803px;height:16px;background:#f3f3f5;"></div>
<div style="left:547px;top:693px;width:481px;height:8px;background:linear-gradient(#f2f2f4,#d9d9de);border:1px solid #a9a9b2;border-radius:4px;"></div>
<svg style="left:537px;top:693px" width="5" height="8"><path d="M4.5 0.5 V7.5 L0.5 4 Z" fill="#70707a"/></svg>
<svg style="left:1321px;top:693px" width="5" height="8"><path d="M0.5 0.5 V7.5 L4.5 4 Z" fill="#70707a"/></svg>
<div style="left:580px;top:304px;width:151px;height:104px;background:#fff;border:3px solid #000;box-shadow:2px 2px 3px rgba(0,0,0,.35);"></div>
<div style="left:710px;top:307px;width:18px;height:98px;background:linear-gradient(90deg,#efeff2,#f7f7f9);"></div>
<svg style="left:716px;top:312px" width="8" height="5"><path d="M0.5 4.5 H7.5 L4 0.5 Z" fill="#d2d2d9"/></svg>
<svg style="left:716px;top:395px" width="8" height="5"><path d="M0.5 0.5 H7.5 L4 4.5 Z" fill="#d2d2d9"/></svg>
<span class="t g" style="left:589.0px;top:310.5px;line-height:15px;letter-spacing:-0.25px;">Process</span>
<div style="left:584px;top:329px;width:127px;height:40px;background:linear-gradient(#c3d0f7,#dde5fc);border:3px solid #000;"></div>
<svg style="left:592px;top:340px" width="16" height="16" viewBox="0 0 16 16"><defs><linearGradient id="pl" x1="0" y1="0" x2="0" y2="1"><stop offset="0" stop-color="#ffffff"/><stop offset=".6" stop-color="#e3f0fb"/><stop offset=".62" stop-color="#7fb9ea"/><stop offset="1" stop-color="#5ea3df"/></linearGradient></defs><path d="M5 1 H11 V5 H15 V11 H11 V15 H5 V11 H1 V5 H5 Z" fill="url(#pl)" stroke="#2f6fb8" stroke-width="1.5" stroke-linejoin="round"/></svg>
<span class="t" style="left:614.0px;top:334.4px;line-height:15px;font-size:11.25px;font-weight:bold;letter-spacing:0.30px;color:#15152a;">Contact</span>
<span class="t" style="left:614.0px;top:347.5px;line-height:15px;letter-spacing:-0.02px;">Add a contact</span>
<svg style="left:592px;top:378px" width="16" height="16" viewBox="0 0 16 16"><rect x="0.5" y="0.5" width="15" height="15" rx="1.5" fill="#dc4a3c" stroke="#c0392d"/><path d="M4.2 4.2 L11.8 11.8 M11.8 4.2 L4.2 11.8" stroke="#f6ecea" stroke-width="3.6" stroke-linecap="round"/></svg>
<span class="t" style="left:614.0px;top:372.2px;line-height:15px;font-size:11.72px;font-weight:bold;letter-spacing:0.30px;color:#15152a;">Delete</span>
<span class="t" style="left:613.0px;top:385.5px;line-height:15px;letter-spacing:0.07px;">Delete the contact</span>
<div style="left:6px;top:706px;width:1328px;height:29px;background:linear-gradient(#e3e3e7,#d2d2d7 55%,#cacad0);border-top:1px solid #b9b9c0;border-bottom:1px solid #a9a9b2;"></div>
<span class="t" style="left:14.0px;top:713.5px;line-height:15px;letter-spacing:-0.22px;">Open Windows</span>
<svg style="left:89px;top:719px" width="7" height="4"><path d="M0 0 H7 L3.5 4 Z" fill="#20202c"/></svg>
<div style="left:882px;top:712px;width:1px;height:18px;background:#b3b3bc;box-shadow:1px 0 0 #ececf0;"></div>
<div style="left:970px;top:712px;width:1px;height:18px;background:#b3b3bc;box-shadow:1px 0 0 #ececf0;"></div>
<div style="left:1043px;top:712px;width:1px;height:18px;background:#b3b3bc;box-shadow:1px 0 0 #ececf0;"></div>
<div style="left:1140px;top:712px;width:1px;height:18px;background:#b3b3bc;box-shadow:1px 0 0 #ececf0;"></div>
<span class="t" style="left:891.0px;top:713.5px;line-height:15px;letter-spacing:-0.14px;">User : JudithM</span>
<span class="t" style="left:978.0px;top:713.5px;line-height:15px;letter-spacing:-0.01px;">04/12/2019</span>
<span class="t" style="left:1051.0px;top:713.5px;line-height:15px;letter-spacing:0.09px;">Version : 2.3.0.4</span>
<span class="t" style="left:1148.0px;top:713.7px;line-height:15px;font-size:10.41px;letter-spacing:-0.25px;">TEST ALPHA - JUDITH PC LOCAL</span>
<svg style="left:1321px;top:722px" width="11" height="11"><path d="M10 1 L1 10 M10 5 L5 10 M10 8.5 L8.5 10" stroke="#9a9aa4" stroke-width="1.2"/></svg>
</body></html>
